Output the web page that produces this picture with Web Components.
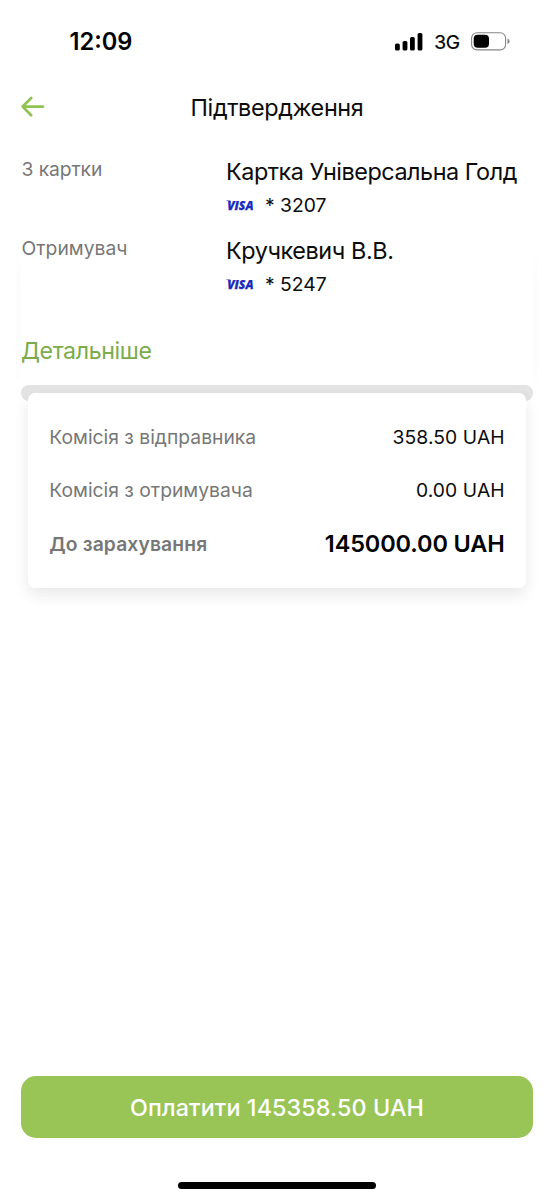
<!DOCTYPE html>
<html lang="uk">
<head>
<meta charset="utf-8">
<title>Підтвердження</title>
<style>
html,body{margin:0;background:#fff}
body{font-family:Inter,"Liberation Sans",sans-serif;color:#0c0c0c}
</style>
</head>
<body>
<pay-screen>
  <status-bar slot="status" time="12:09" network="3G"></status-bar>
  <nav-header slot="header">Підтвердження</nav-header>
  <card-row label="З картки" number="* 3207" style="--ls:-.12px;--name-ls:-.46px">Картка Універсальна Голд</card-row>
  <card-row label="Отримувач" number="* 5247" style="--ls:0px;--name-ls:-.4px">Кручкевич В.В.</card-row>
  <details-link>Детальніше</details-link>
  <receipt-card>
    <fee-row label="Комісія з відправника">358.50 UAH</fee-row>
    <fee-row label="Комісія з отримувача">0.00 UAH</fee-row>
    <fee-row total label="До зарахування">145000.00 UAH</fee-row>
  </receipt-card>
  <pay-button slot="footer">Оплатити 145358.50 UAH</pay-button>
  <home-indicator slot="footer"></home-indicator>
</pay-screen>
<script>
const define = (name, html) => customElements.define(name, class extends HTMLElement {
  constructor() {
    super();
    const t = document.createElement('template');
    t.innerHTML = html;
    this.attachShadow({mode: 'open'}).append(t.content.cloneNode(true));
  }
  connectedCallback() {
    this.shadowRoot.querySelectorAll('[data-attr]').forEach(e => e.textContent = this.getAttribute(e.dataset.attr));
  }
});

define('visa-mark', `
<style>
:host{display:block;width:28px;height:12px}
svg{display:block;overflow:visible}
text{font:italic 800 13px "Open Sans",sans-serif;fill:#1a2bbd;stroke:#1a2bbd;stroke-width:.25px}
</style>
<svg width="28" height="12" viewBox="0 0 28 12"><path d="M0 1.4H4.2L5 3.8Q3 1.9 0 1.7Z" fill="#1a2bbd"/><text x="1.2" y="10.7" textLength="26.3" lengthAdjust="spacingAndGlyphs">VISA</text></svg>`);

define('status-bar', `
<style>
:host{display:flex;align-items:center;height:83px;padding:0 44px 0 69.6px;color:#000}
.time{font-size:23.6px;font-weight:600;line-height:28px;letter-spacing:0;flex:1}
.bars{margin-right:11px}
.net{font-size:19.2px;line-height:24px;letter-spacing:-.2px;margin-right:11px;-webkit-text-stroke:.2px #000}
svg{display:block}
</style>
<span class="time" data-attr="time"></span>
<svg class="bars" width="28" height="18" viewBox="0 0 28 18"><rect x="0" y="10.5" width="4.8" height="7" rx="1.6"/><rect x="7.6" y="8" width="4.8" height="9.5" rx="1.6"/><rect x="15" y="4" width="4.8" height="13.5" rx="1.6"/><rect x="22.6" y="0" width="4.8" height="17.5" rx="1.6"/></svg>
<span class="net" data-attr="network"></span>
<svg width="39" height="19" viewBox="0 0 39 19"><rect x=".6" y=".7" width="34" height="17.2" rx="5.4" fill="#fff" stroke="#858585" stroke-width="1.1"/><rect x="2.7" y="2.8" width="15.3" height="13" rx="4"/><path d="M36.5 6.5Q38.6 7.3 38.6 9.3T36.5 12Z" fill="#888"/></svg>`);

define('nav-header', `
<style>
:host{display:grid;grid-template-columns:24px 1fr 24px;align-items:center;height:48px;padding:0 21px}
.title{font-size:23.4px;line-height:30px;text-align:center;letter-spacing:-.36px;padding-top:1px}
svg{display:block}
</style>
<svg width="24" height="22" viewBox="0 0 24 22" fill="none" stroke="#8fc24f" stroke-width="2.7" stroke-linecap="round" stroke-linejoin="round"><path d="M22 10.6H1.6M10.2 2L1.6 10.6L10.2 19.2"/></svg>
<span class="title"><slot></slot></span>`);

define('card-row', `
<style>
:host{display:grid;grid-template-columns:204.4px 1fr;height:79px;padding-left:21.6px;white-space:nowrap}
.label{font-size:19.3px;line-height:24px;color:#777;letter-spacing:var(--ls);padding-top:6px}
.name{font-size:23.4px;line-height:30px;letter-spacing:var(--name-ls);padding-top:6px}
.num{display:flex;align-items:center;gap:11px;font-size:19.3px;line-height:24px;margin-top:6px}
</style>
<span class="label" data-attr="label"></span>
<div><div class="name"><slot></slot></div><div class="num"><visa-mark></visa-mark><span data-attr="number"></span></div></div>`);

define('details-link', `
<style>
:host{display:block;position:relative;height:76px;margin:0 21px;color:#7bab4b;font-size:23.2px;line-height:30px;letter-spacing:-.4px}
span{display:block;padding-top:27px}
:host::before,:host::after{content:"";position:absolute;top:-58px;width:5px;bottom:0;background:linear-gradient(#fff,#fcfcfc 25%,#fcfcfc 85%,#fff)}
:host::before{left:-5px}:host::after{right:-5px}
</style><span><slot></slot></span>`);

define('receipt-card', `
<style>
:host{display:grid;margin:0 21px;grid-template-rows:8px auto}
.slit{grid-area:1/1;height:15.5px;border-radius:8px;background:#e3e3e3}
.paper{grid-area:2/1;position:relative;margin:0 7.3px;height:195px;box-sizing:border-box;padding:17px 21px 0;background:#fff;border-radius:7px;box-shadow:0 7px 15px rgba(0,0,0,.09)}
</style><div class="slit"></div><div class="paper"><slot></slot></div>`);

define('fee-row', `
<style>
:host{display:flex;align-items:center;justify-content:space-between;height:53.5px;font-size:19.3px;line-height:26px}
.label{color:#777}
.value{letter-spacing:.08px}
:host([total]) .label{font-weight:600;letter-spacing:.12px}
:host([total]) .value{font-size:23.5px;font-weight:600;color:#000;letter-spacing:-.12px;padding-top:1px}
</style><span class="label" data-attr="label"></span><span class="value"><slot></slot></span>`);

define('pay-button', `
<style>
:host{display:block;margin:0 21px}
button{display:block;width:100%;height:62px;border:0;border-radius:15px;background:#99c556;color:#fff;font:500 23.3px/30px Inter,sans-serif;letter-spacing:.12px;padding:2px 0 0}
</style><button><slot></slot></button>`);

define('home-indicator', `
<style>
:host{display:block;width:197.5px;height:7px;margin:44px auto 11px;border-radius:4px;background:#000}
</style>`);

define('pay-screen', `
<style>
:host{display:flex;flex-direction:column;height:1200px;background:#fff;overflow:hidden}
main{flex:1;padding-top:20px}
</style>
<slot name="status"></slot><slot name="header"></slot><main><slot></slot></main><slot name="footer"></slot>`);
</script>
</body>
</html>
